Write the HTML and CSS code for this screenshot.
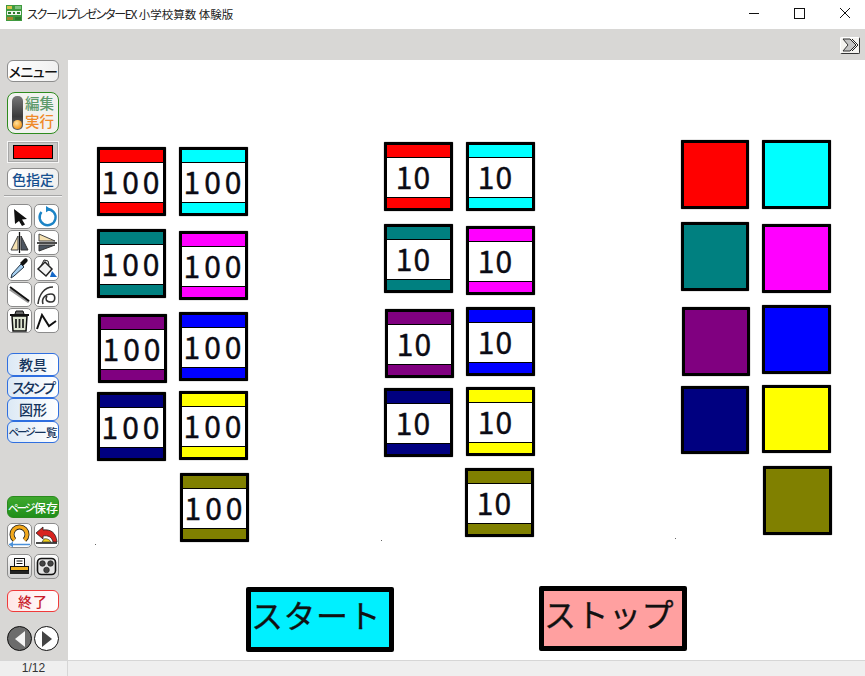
FILE: index.html
```html
<!DOCTYPE html>
<html lang="ja">
<head>
  <meta charset="UTF-8">
  <title>スクールプレゼンターEX 小学校算数 体験版</title>
  <link rel="stylesheet" href="styles.css">
</head>
<body>
<div class="app">

  <!-- title bar -->
  <div class="titlebar">
    <svg class="appIcon" width="16" height="16" viewBox="0 0 16 16">
      <rect width="16" height="16" fill="#3f9a3f"/>
      <rect x="1" y="1" width="5" height="3" fill="#d7c24a"/>
      <rect x="9" y="1" width="6" height="3" fill="#7fc27f"/>
      <rect x="1" y="6" width="14" height="4" fill="#eef5ee"/>
      <rect x="2" y="7" width="3" height="2" fill="#2d7a2d"/>
      <rect x="7" y="7" width="2" height="2" fill="#2d7a2d"/>
      <rect x="11" y="7" width="3" height="2" fill="#2d7a2d"/>
      <rect x="1" y="12" width="6" height="3" fill="#a8862f"/>
      <rect x="9" y="12" width="6" height="3" fill="#2d7a2d"/>
    </svg>
    <span class="titleText"><span class="titleKana">スクールプレゼンターEX</span> 小学校算数 体験版</span>
    <div class="winButtons">
      <svg width="46" height="29" viewBox="0 0 46 29"><path d="M18 13.500h10" stroke="#111" fill="none"/></svg>
      <svg width="46" height="29" viewBox="0 0 46 29"><rect x="17.500" y="8.500" width="10" height="10" stroke="#111" fill="none"/></svg>
      <svg width="46" height="29" viewBox="0 0 46 29"><path d="M17 8l10 10M27 8L17 18" stroke="#111" fill="none"/></svg>
    </div>
  </div>

  <!-- top tool strip -->
  <div class="toolbar">
    <button class="expandBtn">
      <svg width="18" height="14" viewBox="0 0 18 14">
        <path d="M2 1h7l6 6-6 6H2l5-6z" fill="#c4c4c4" stroke="#333"/>
        <path d="M9 1l6 6-6 6M11 1l6 6-6 6" fill="none" stroke="#222"/>
      </svg>
    </button>
  </div>

  <div class="main">
    <!-- left side panel -->
    <div class="sidebar">
      <button class="sideBtn menuBtn">メニュー</button>

      <div class="modeToggle">
        <div class="toggleTrack"><span class="toggleDot"></span></div>
        <div class="toggleLabels">
          <span class="modeEdit">編集</span>
          <span class="modeRun">実行</span>
        </div>
      </div>

      <div class="colorWell"><span class="colorSwatch"></span></div>
      <button class="sideBtn colorBtn">色指定</button>
      <div class="sideRule"></div>

      <div class="toolGrid">
        <button class="toolBtn">
          <svg width="23" height="23" viewBox="0 0 23 23"><path d="M6 4l13 10-5 .5 3 5-3 1.500-3-5-4 3z" fill="#111"/></svg>
        </button>
        <button class="toolBtn">
          <svg width="23" height="23" viewBox="0 0 23 23"><path d="M6.500 7a8 8 0 1 0 6-2.800" fill="none" stroke="#1c84c6" stroke-width="2.400"/><path d="M11 1l5 3.200-5 3z" fill="#1c84c6"/></svg>
        </button>
        <button class="toolBtn">
          <svg width="23" height="23" viewBox="0 0 23 23"><path d="M10 5v14H3z" fill="#f6e2b2" stroke="#444"/><path d="M13 5v14h7z" fill="#4c5560" stroke="#333"/><path d="M11.500 1v21" stroke="#111" stroke-width="1.300"/></svg>
        </button>
        <button class="toolBtn">
          <svg width="23" height="23" viewBox="0 0 23 23"><path d="M4 3l16 7H4z" fill="#f6e2b2" stroke="#444"/><path d="M4 20l16-6H4z" fill="#4c5560" stroke="#333"/><path d="M2 12h20" stroke="#111" stroke-width="1.300"/></svg>
        </button>
        <button class="toolBtn">
          <svg width="23" height="23" viewBox="0 0 23 23"><path d="M3 21l1-4 9-10 3 3-10 9z" fill="#a6cff0" stroke="#234" stroke-width="1"/><path d="M12 6l4-4c2-2 5 1 3 3l-4 4z" fill="#111"/></svg>
        </button>
        <button class="toolBtn">
          <svg width="23" height="23" viewBox="0 0 23 23"><path d="M3 12l7-7 7 7-6 7z" fill="#f4f4f4" stroke="#222" stroke-width="1.500"/><path d="M6 9l3-6 4 1 1 4" fill="none" stroke="#222"/><path d="M17 14l5 6h-7z" fill="#1468c8"/></svg>
        </button>
        <button class="toolBtn">
          <svg width="23" height="23" viewBox="0 0 23 23"><path d="M2 6l19 13" stroke="#999" stroke-width="3"/><path d="M2 4l19 14" stroke="#111" stroke-width="1.800"/></svg>
        </button>
        <button class="toolBtn">
          <svg width="23" height="23" viewBox="0 0 23 23"><path d="M3 21c1-9 6-17 15-17M8 21c-2-6 3-10 8-10 5 0 5 8 0 8s-6-3-4-6" fill="none" stroke="#333" stroke-width="1.600"/></svg>
        </button>
        <button class="toolBtn">
          <svg width="23" height="23" viewBox="0 0 23 23"><path d="M2 6h19" stroke="#111" stroke-width="2.200"/><path d="M7 5l1-3h7l1 3" fill="#666" stroke="#111"/><path d="M4 7h15l-1 15H5z" fill="#dfe6d2" stroke="#111" stroke-width="1.500"/><path d="M8 10v9M11.500 10v9M15 10v9" stroke="#222" stroke-width="1.800"/></svg>
        </button>
        <button class="toolBtn">
          <svg width="23" height="23" viewBox="0 0 23 23"><path d="M2 20L7 6l7 11 7-5" fill="none" stroke="#111" stroke-width="2"/></svg>
        </button>
      </div>

      <div class="blueGroup">
        <button class="sideBtn blueBtn">教具</button>
        <button class="sideBtn blueBtn stampBtn">スタンプ</button>
        <button class="sideBtn blueBtn">図形</button>
        <button class="sideBtn blueBtn listBtn"><span class="kana">ページ</span>一覧</button>
      </div>

      <button class="sideBtn saveBtn"><span class="kana">ページ</span>保存</button>

      <div class="iconRow undoRow">
        <button class="toolBtn">
          <svg width="23" height="23" viewBox="0 0 23 23"><path d="M6.500 16a7.500 7.500 0 1 1 10 0" fill="none" stroke="#222" stroke-width="5"/><path d="M6.500 16a7.500 7.500 0 1 1 10 0" fill="none" stroke="#f2a81c" stroke-width="3.400"/><path d="M1 20.500h21" stroke="#4a90d8" stroke-width="1.400"/><path d="M1 20.500l4-3v6z" fill="#4a90d8"/></svg>
        </button>
        <button class="toolBtn">
          <svg width="23" height="23" viewBox="0 0 23 23"><path d="M1 19h21" stroke="#111" stroke-width="1.600"/><path d="M1 9l7-6v3c7-1 13 2 14 12h-4c-1-5-5-7-10-6v3z" fill="#d8231f" stroke="#222" stroke-width=".8"/><path d="M7 18h9c-1-2-4-4-7-3z" fill="#f2d21c" stroke="#222" stroke-width=".6"/></svg>
        </button>
      </div>

      <div class="iconRow printRow">
        <button class="toolBtn greyBtn">
          <svg width="23" height="23" viewBox="0 0 23 23"><rect x="6.500" y="3.500" width="10" height="8" fill="#fff" stroke="#111"/><path d="M8.500 6h6M8.500 8.500h6" stroke="#111"/><rect x="2.500" y="11.500" width="18" height="4" fill="#f2b21c" stroke="#111"/><rect x="2" y="16" width="19" height="3" fill="#222"/></svg>
        </button>
        <button class="toolBtn greyBtn">
          <svg width="23" height="23" viewBox="0 0 23 23"><rect x="2.500" y="3.500" width="18" height="16" rx="4" fill="#e4e4e4" stroke="#111" stroke-width="1.600"/><circle cx="7.500" cy="8.500" r="2.800" fill="#444" stroke="#111" stroke-width=".6"/><circle cx="15.500" cy="8.500" r="2.800" fill="#444" stroke="#111" stroke-width=".6"/><circle cx="11.500" cy="15" r="2.800" fill="#444" stroke="#111" stroke-width=".6"/></svg>
        </button>
      </div>

      <button class="sideBtn endBtn">終了</button>

      <div class="navRow">
        <button class="navBtn navPrev">
          <svg width="12" height="16" viewBox="0 0 12 16"><path d="M11 0v16L1 8z" fill="#f4f4f4"/></svg>
        </button>
        <button class="navBtn navNext">
          <svg width="12" height="16" viewBox="0 0 12 16"><path d="M1 0v16l10-8z" fill="#444"/></svg>
        </button>
      </div>
    </div>

    <!-- page canvas -->
    <div class="canvas">
      <div class="stamp red s100 a1"><span>100</span></div>
      <div class="stamp cyan s100 a2"><span>100</span></div>
      <div class="stamp teal s100 a3"><span>100</span></div>
      <div class="stamp magenta s100 a4"><span>100</span></div>
      <div class="stamp purple s100 a5"><span>100</span></div>
      <div class="stamp blue s100 a6"><span>100</span></div>
      <div class="stamp navy s100 a7"><span>100</span></div>
      <div class="stamp yellow s100 a8"><span>100</span></div>
      <div class="stamp olive s100 a9"><span>100</span></div>

      <div class="stamp s10 red b1"><span>10</span></div>
      <div class="stamp s10 cyan b2"><span>10</span></div>
      <div class="stamp s10 teal b3"><span>10</span></div>
      <div class="stamp s10 magenta b4"><span>10</span></div>
      <div class="stamp s10 purple b5"><span>10</span></div>
      <div class="stamp s10 blue b6"><span>10</span></div>
      <div class="stamp s10 navy b7"><span>10</span></div>
      <div class="stamp s10 yellow b8"><span>10</span></div>
      <div class="stamp s10 olive b9"><span>10</span></div>

      <div class="square red c1"></div>
      <div class="square cyan c2"></div>
      <div class="square teal c3"></div>
      <div class="square magenta c4"></div>
      <div class="square purple c5"></div>
      <div class="square blue c6"></div>
      <div class="square navy c7"></div>
      <div class="square yellow c8"></div>
      <div class="square olive c9"></div>

      <span class="speck d1"></span>
      <span class="speck d2"></span>
      <span class="speck d3"></span>

      <button class="bigBtn startBtn">スタート</button>
      <button class="bigBtn stopBtn">ストップ</button>
    </div>
  </div>

  <!-- status bar -->
  <div class="statusbar">
    <div class="pageNo">1/12</div>
  </div>
</div>
</body>
</html>
```
FILE: styles.css
```css
* {
  box-sizing: border-box;
}

body {
  margin: 0;
  padding: 0;
  background: #fff;
  font-family: "Noto Sans CJK JP", "Noto Sans", sans-serif;
}

button {
  font-family: inherit;
  padding: 0;
  cursor: pointer;
}

.app {
  width: 865px;
  height: 676px;
  display: flex;
  flex-direction: column;
  overflow: hidden;
}

/* title bar */
.titlebar {
  height: 29px;
  display: flex;
  align-items: center;
  background: #fff;
  padding-left: 6px;
}

.appIcon {
  flex: none;
  margin-top: -3px;
}

.titleText {
  margin-left: 5px;
  margin-top: -3px;
  font-size: 11.500px;
  font-feature-settings: "palt";
  color: #222;
  white-space: nowrap;
}

.titleKana {
  font-size: 12px;
  letter-spacing: -1.300px;
}

.winButtons {
  margin-left: auto;
  margin-right: -4px;
  display: flex;
}

.winButtons svg {
  display: block;
}

/* tool strip */
.toolbar {
  height: 31px;
  background: #d8d7d5;
  display: flex;
  justify-content: flex-end;
  align-items: center;
  padding-right: 5px;
}

.expandBtn {
  width: 20px;
  height: 17px;
  display: flex;
  align-items: center;
  justify-content: center;
  background: #f4f3f0;
  border: 1px solid #fff;
  border-right-color: #333;
  border-bottom-color: #333;
  border-radius: 2px;
  margin-top: 1px;
}

.main {
  flex: 1;
  display: flex;
  min-height: 0;
}

/* side panel */
.sidebar {
  width: 68px;
  background: #d8d7d5;
  display: flex;
  flex-direction: column;
  padding: 0 9px 0 7px;
}

.sideBtn {
  width: 52px;
  height: 22px;
  display: flex;
  align-items: center;
  justify-content: center;
  border-radius: 6px;
  background: linear-gradient(90deg, #fff 0%, #f0f0f0 100%);
  border: 1px solid #8c8c8c;
  font-weight: 500;
  font-feature-settings: "palt";
  white-space: nowrap;
}

.kana {
  font-size: 10.500px;
  letter-spacing: -2px;
  margin-right: 1px;
}

.menuBtn {
  font-size: 14px;
  letter-spacing: -0.5px;
  color: #111;
}

.modeToggle {
  width: 52px;
  height: 42px;
  margin-top: 10px;
  display: flex;
  align-items: center;
  padding-left: 4px;
  gap: 2px;
  background: #f2f2f0;
  border: 1px solid #2e8b1e;
  border-radius: 8px;
}

.toggleTrack {
  position: relative;
  width: 11px;
  height: 34px;
  border-radius: 5px;
  background: linear-gradient(180deg, #777 0%, #3a3a3a 60%, #666 100%);
}

.toggleDot {
  position: absolute;
  left: 1px;
  bottom: 1px;
  width: 9px;
  height: 9px;
  border-radius: 50%;
  background: radial-gradient(circle at 40% 35%, #ffe2a0 0%, #f59a1e 70%);
}

.toggleLabels {
  display: flex;
  flex-direction: column;
  gap: 1px;
  font-family: "Liberation Sans", "Noto Sans CJK JP", sans-serif;
  font-size: 14.500px;
  font-weight: 500;
}

.toggleLabels span {
  display: block;
  height: 17px;
  line-height: 17px;
}

.modeEdit {
  color: #5f9a6c;
}

.modeRun {
  color: #ef8a2a;
}

.colorWell {
  width: 52px;
  height: 22px;
  margin-top: 7px;
  display: flex;
  align-items: center;
  justify-content: center;
  background: #c9c8c6;
  border: 1px solid #f5f5f5;
  outline: 1px solid #a8a8a8;
  outline-offset: -2px;
}

.colorSwatch {
  width: 40px;
  height: 14px;
  background: #f00;
  border: 1px solid #000;
}

.colorBtn {
  margin-top: 5px;
  font-size: 14px;
  color: #164f8f;
}

.sideRule {
  width: 58px;
  height: 2px;
  margin: 5px 0 0 -3px;
  background: #f2f2f2;
  border-top: 1px solid #a5a5a5;
}

.toolGrid {
  margin-top: 7px;
  display: grid;
  grid-template-columns: 25px 25px;
  grid-auto-rows: 25px;
  column-gap: 2px;
  row-gap: 1px;
}

.toolBtn {
  display: flex;
  align-items: center;
  justify-content: center;
  background: #fff;
  border: 1px solid #8c8c8c;
  border-radius: 5px;
  overflow: hidden;
}

.greyBtn {
  background: linear-gradient(180deg, #fff 0%, #cfcfcf 100%);
}

.blueGroup {
  margin-top: 20px;
  display: flex;
  flex-direction: column;
}

.blueBtn {
  height: 22.500px;
  font-size: 14px;
  color: #15345c;
  background: linear-gradient(90deg, #dce9f5 0%, #ffffff 100%);
  border: 1px solid #2f6fe0;
}

.stampBtn {
  letter-spacing: -2px;
}

.listBtn {
  font-size: 11.500px;
}

.saveBtn {
  margin-top: 53px;
  font-size: 12px;
  color: #fff;
  background: linear-gradient(180deg, #3fa82e 0%, #1f8f1a 100%);
  border: 1px solid #2a8a1e;
}

.iconRow {
  display: flex;
  gap: 2px;
  height: 25px;
}

.iconRow .toolBtn {
  width: 25px;
  height: 25px;
}

.undoRow {
  margin-top: 5px;
}

.printRow {
  margin-top: 6px;
}

.endBtn {
  margin-top: 11px;
  font-size: 14px;
  letter-spacing: 1px;
  color: #c8202a;
  background: linear-gradient(90deg, #ffe6e6 0%, #ffffff 100%);
  border: 1px solid #f03a3a;
}

.navRow {
  display: flex;
  gap: 2px;
  margin-top: 14px;
}

.navBtn {
  width: 25px;
  height: 25px;
  display: flex;
  align-items: center;
  justify-content: center;
  border-radius: 50%;
  border: 1px solid #111;
}

.navPrev {
  background: #6c6c6c;
}

.navNext {
  background: #fff;
}

/* page canvas, things sit wherever the teacher dropped them */
.canvas {
  position: relative;
  flex: 1;
  background: #fff;
}

.stamp,
.square {
  position: absolute;
  width: 69px;
  height: 69px;
  border: 3px solid #000;
  border-radius: 1px;
  background: var(--tone);
  box-shadow: 0 0 1px #000;
}

.stamp {
  display: flex;
}

.stamp span {
  flex: 1;
  min-width: 0;
  margin: 12px 0 10px;
  display: flex;
  align-items: center;
  justify-content: center;
  background: #fff;
  border-top: 1px solid #000;
  border-bottom: 1px solid #000;
  font-size: 30px;
  line-height: 1;
  -webkit-text-stroke: 0.4px #0b0b14;
  color: #0b0b14;
}

.s100 span {
  letter-spacing: 4px;
  padding: 0 0 3px 2px;
}

.s10 span {
  letter-spacing: 1px;
  padding: 0 10px 3px 0;
}

.red { --tone: #f00; }
.cyan { --tone: #0ff; }
.teal { --tone: #008080; }
.magenta { --tone: #f0f; }
.purple { --tone: #800080; }
.blue { --tone: #00f; }
.navy { --tone: #000080; }
.yellow { --tone: #ff0; }
.olive { --tone: #808000; }

.a1 { left: 29px; top: 87px; }
.a2 { left: 111px; top: 87px; }
.a3 { left: 29px; top: 169px; }
.a4 { left: 111px; top: 171px; }
.a5 { left: 30px; top: 254px; }
.a6 { left: 111px; top: 252px; }
.a7 { left: 29px; top: 332px; }
.a8 { left: 111px; top: 331px; }
.a9 { left: 112px; top: 413px; }

.b1 { left: 316px; top: 82px; }
.b2 { left: 398px; top: 82px; }
.b3 { left: 316px; top: 164px; }
.b4 { left: 398px; top: 166px; }
.b5 { left: 317px; top: 249px; }
.b6 { left: 398px; top: 247px; }
.b7 { left: 316px; top: 328px; }
.b8 { left: 398px; top: 327px; }
.b9 { left: 397px; top: 408px; }

.c1 { left: 613px; top: 80px; width: 68px; }
.c2 { left: 694px; top: 80px; }
.c3 { left: 613px; top: 162px; width: 68px; }
.c4 { left: 694px; top: 164px; }
.c5 { left: 614px; top: 247px; width: 68px; }
.c6 { left: 694px; top: 245px; }
.c7 { left: 613px; top: 326px; width: 68px; height: 68px; }
.c8 { left: 694px; top: 325px; height: 68px; }
.c9 { left: 695px; top: 406px; }

.speck {
  position: absolute;
  width: 1px;
  height: 1px;
  background: #666;
}

.d1 { left: 27px; top: 484px; }
.d2 { left: 313px; top: 480px; }
.d3 { left: 607px; top: 478px; }

.bigBtn {
  position: absolute;
  width: 148px;
  height: 65px;
  border: 5px solid #000;
  border-radius: 2px;
  color: #111;
  font-size: 32px;
  letter-spacing: 0.500px;
  -webkit-text-stroke: 0.3px #111;
  line-height: 1;
  white-space: nowrap;
  display: flex;
  align-items: center;
  justify-content: flex-start;
  padding-bottom: 12px;
}

.startBtn {
  left: 178px;
  top: 527px;
  background: #00f0ff;
}

.stopBtn {
  left: 471px;
  top: 526px;
  background: #ffa0a0;
}

/* status bar */
.statusbar {
  height: 16px;
  background: #efefef;
  border-top: 1px solid #d6d6d6;
}

.pageNo {
  width: 68px;
  height: 15px;
  border-right: 1px solid #d6d6d6;
  font-family: "Liberation Sans", sans-serif;
  font-size: 12px;
  line-height: 15px;
  text-align: center;
  color: #333;
}
```
